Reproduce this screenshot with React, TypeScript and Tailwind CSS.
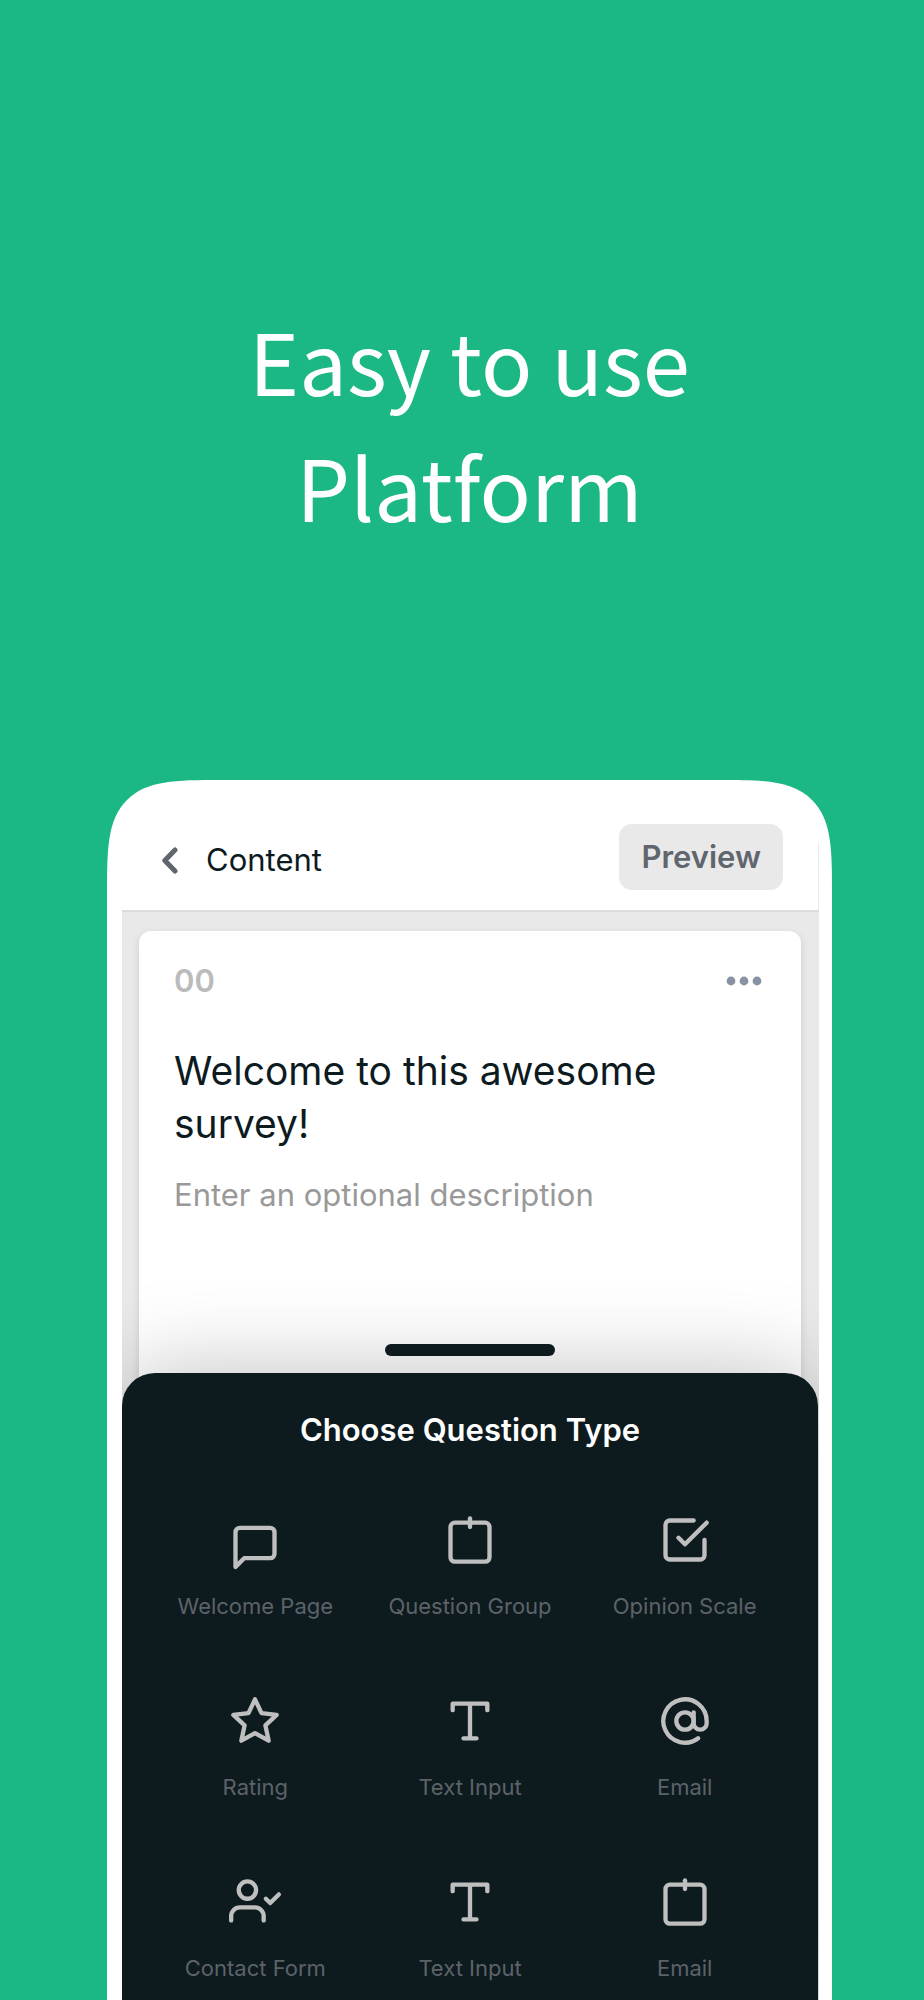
import type { ReactNode } from 'react'

const questionTypes: { label: string; icon: ReactNode }[] = [
  { label: 'Welcome Page', icon: <MessageShape /> },
  { label: 'Question Group', icon: <GroupShape /> },
  { label: 'Opinion Scale', icon: <CheckShape /> },
  { label: 'Rating', icon: <StarShape /> },
  { label: 'Text Input', icon: <TypeShape /> },
  { label: 'Email', icon: <AtShape /> },
  { label: 'Contact Form', icon: <UserCheckShape /> },
  { label: 'Text Input', icon: <TypeShape /> },
  { label: 'Email', icon: <GroupShape /> },
]

function MessageShape() {
  return <path d="M21 18.4a2 2 0 0 1-2 2H7l-4 4v-16a2 2 0 0 1 2-2h14a2 2 0 0 1 2 2z" />
}

function GroupShape() {
  return (
    <>
      <rect x="3" y="4" width="18" height="18" rx="2" />
      <path d="M12 2v4" />
    </>
  )
}

function CheckShape() {
  return (
    <>
      <path d="m9 11 3 3L22 4" />
      <path d="M21 12v7a2 2 0 0 1-2 2H5a2 2 0 0 1-2-2V5a2 2 0 0 1 2-2h11" />
    </>
  )
}

function StarShape() {
  return <path d="m12 2 3 6.4 7 .8-5.2 4.8 1.5 7.1L12 17.6l-6.3 3.5L7.2 14 2 9.2l7-.8z" />
}

function TypeShape() {
  return <path d="M4 7V4h16v3M9 20h6M12 4v16" />
}

function AtShape() {
  return (
    <>
      <circle cx="12" cy="12" r="4" />
      <path d="M16 8v5a3 3 0 0 0 6 0v-1a10 10 0 1 0-3.92 7.94" />
    </>
  )
}

function UserCheckShape() {
  return (
    <>
      <path d="M16 20.5v-2a4 4 0 0 0-4-4H5a4 4 0 0 0-4 4v2" />
      <circle cx="8.5" cy="6.5" r="4" />
      <path d="m17 10.5 2 2 4-4" />
    </>
  )
}

function TopBar() {
  return (
    <header className="relative mr-px flex items-center justify-between pt-11 pr-[35px] pb-5 pl-10">
      <a href="#" className="flex items-center gap-7 pt-1.5 text-[31px] leading-9 text-[#0d1b1f]">
        <svg className="h-[27px] w-4" viewBox="0 0 16 27" fill="none" stroke="#60666e" strokeWidth="5" strokeLinecap="round" strokeLinejoin="round">
          <path d="M13 3 2.8 13.5 13 24" />
        </svg>
        Content
      </a>
      <button className="rounded-[13px] bg-[#e9e9e9] px-[22px] py-[15px] text-[31px] leading-9 font-semibold text-[#60666e]">
        Preview
      </button>
      <span className="absolute top-[62px] -right-px bottom-0 w-px bg-[#ececec]" />
    </header>
  )
}

function SurveyCard() {
  return (
    <section className="rounded-t-xl bg-white px-[35px] pt-8 pb-[193px] shadow-[0_3px_8px_rgba(0,0,0,0.12)]">
      <div className="flex items-center justify-between text-[31px] leading-9 font-semibold text-[#bbbbbb]">
        <span>00</span>
        <button aria-label="More" className="px-1">
          <svg className="h-9 w-[37px]" viewBox="0 0 37 36" fill="#8792a5">
            <circle cx="6" cy="18" r="4.4" />
            <circle cx="19" cy="18" r="4.4" />
            <circle cx="32" cy="18" r="4.4" />
          </svg>
        </button>
      </div>
      <h2 className="mt-[45px] text-[39px] leading-[53px] text-[#0d1b1f]">Welcome to this awesome survey!</h2>
      <input
        type="text"
        aria-label="Description"
        placeholder="Enter an optional description"
        className="mt-[27px] block h-9 w-full text-[31px] leading-9 outline-none placeholder:text-[#999999]"
      />
    </section>
  )
}

function QuestionSheet() {
  return (
    <section className="relative -mt-[33px] mr-px flex-1 rounded-t-[33px] bg-[#0d1b1f] px-[26px] pt-[39px] shadow-[0_0_90px_rgba(0,0,0,0.25)]">
      <div className="absolute -top-[29px] left-1/2 h-3 w-[170px] -translate-x-1/2 rounded-full bg-[#0d1b1f]" />
      <h2 className="text-center text-[31px] leading-9 font-semibold text-white">Choose Question Type</h2>
      <div className="mt-[66px] grid grid-cols-3 gap-y-[75px]">
        {questionTypes.map((type, i) => (
          <button key={i} className="flex flex-col items-center gap-[26px] text-[22px] leading-7 text-[#5d6269]">
            <svg
              className="size-[52px] overflow-visible"
              viewBox="0 0 24 24"
              fill="none"
              stroke="#c0bfbf"
              strokeWidth="2"
              strokeLinecap="round"
              strokeLinejoin="round"
            >
              {type.icon}
            </svg>
            {type.label}
          </button>
        ))}
      </div>
    </section>
  )
}

export default function App() {
  return (
    <main className="flex min-h-screen flex-col bg-[#1bb785] pt-[296px] pr-[92px] pl-[107px] font-['Inter',sans-serif]">
      <h1 className="text-center font-['Noto_Sans_CJK_JP',sans-serif] text-[85px] leading-[126px] text-white">
        Easy to use
        <br />
        Platform
      </h1>
      <div className="mt-[232px] flex flex-1 flex-col rounded-t-[72px] bg-white pr-[13px] pl-[15px] supports-[corner-shape:squircle]:rounded-t-[113px] supports-[corner-shape:squircle]:[corner-shape:superellipse(1.83)]">
        <TopBar />
        <div className="flex flex-1 flex-col overflow-hidden border-t-2 border-[#dcdcdc] bg-[#e9e9e9] pt-[19px]">
          <div className="pr-[18px] pl-[17px]">
            <SurveyCard />
          </div>
          <QuestionSheet />
        </div>
      </div>
    </main>
  )
}
